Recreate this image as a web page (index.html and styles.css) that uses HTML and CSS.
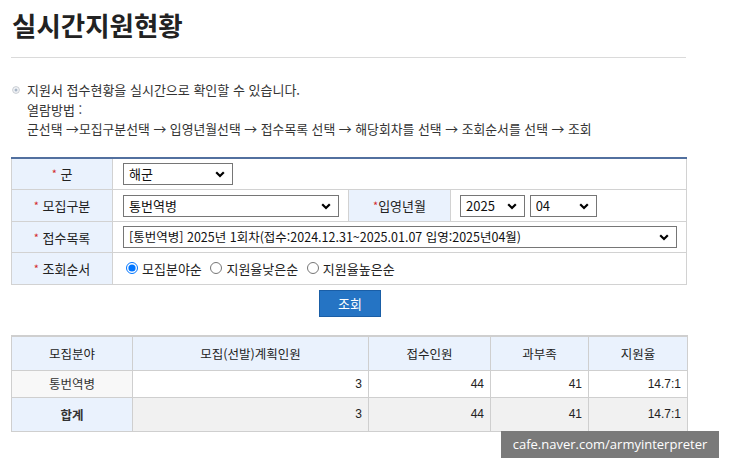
FILE: index.html
```html
<!DOCTYPE html>
<html lang="ko">
<head>
<meta charset="utf-8">
<title>실시간지원현황</title>
<link rel="stylesheet" href="styles.css">
</head>
<body>
<div class="page">
  <h1 class="title">실시간지원현황</h1>

  <div class="info">
    <p class="info-line"><svg class="bullet" width="8" height="8" viewBox="0 0 8 8"><circle cx="4" cy="4" r="3.4" fill="#f3f5f8" stroke="#c4c8ce" stroke-width="0.9"/><circle cx="4" cy="4" r="1.5" fill="#a9b6c6"/></svg>지원서 접수현황을 실시간으로 확인할 수 있습니다.</p>
    <p class="info-line">열람방법 :</p>
    <p class="info-line">군선택 →모집구분선택 → 입영년월선택 → 접수목록 선택 → 해당회차를 선택 → 조회순서를 선택 → 조회</p>
  </div>

  <table class="form">
    <colgroup><col class="c1"><col class="c2"><col class="c3"><col class="c4"></colgroup>
    <tr class="r1">
      <th><span class="star">*</span> 군</th>
      <td colspan="3">
        <span class="sel w-gun"><select><option>해군</option></select><svg width="10" height="7" viewBox="0 0 10 7"><path d="M1.2 1.2 L5 5 L8.8 1.2" fill="none" stroke="#000" stroke-width="2.2"/></svg></span>
      </td>
    </tr>
    <tr class="r2">
      <th><span class="star">*</span> 모집구분</th>
      <td>
        <span class="sel w-type"><select><option>통번역병</option></select><svg width="10" height="7" viewBox="0 0 10 7"><path d="M1.2 1.2 L5 5 L8.8 1.2" fill="none" stroke="#000" stroke-width="2.2"/></svg></span>
      </td>
      <th><span class="star">*</span>입영년월</th>
      <td>
        <span class="sel w-year"><select><option>2025</option></select><svg width="10" height="7" viewBox="0 0 10 7"><path d="M1.2 1.2 L5 5 L8.8 1.2" fill="none" stroke="#000" stroke-width="2.2"/></svg></span>
        <span class="sel w-month"><select><option>04</option></select><svg width="10" height="7" viewBox="0 0 10 7"><path d="M1.2 1.2 L5 5 L8.8 1.2" fill="none" stroke="#000" stroke-width="2.2"/></svg></span>
      </td>
    </tr>
    <tr class="r3">
      <th><span class="star">*</span> 접수목록</th>
      <td colspan="3">
        <span class="sel w-list"><select><option>[통번역병] 2025년 1회차(접수:2024.12.31~2025.01.07 입영:2025년04월)</option></select><svg width="10" height="7" viewBox="0 0 10 7"><path d="M1.2 1.2 L5 5 L8.8 1.2" fill="none" stroke="#000" stroke-width="2.2"/></svg></span>
      </td>
    </tr>
    <tr class="r4">
      <th><span class="star">*</span> 조회순서</th>
      <td colspan="3" class="radios">
        <label><input type="radio" name="ord" checked>모집분야순</label>
        <label><input type="radio" name="ord">지원율낮은순</label>
        <label><input type="radio" name="ord">지원율높은순</label>
      </td>
    </tr>
  </table>

  <div class="btn-row"><button class="btn">조회</button></div>

  <table class="data">
    <colgroup><col class="d1"><col class="d2"><col class="d3"><col class="d4"><col class="d5"></colgroup>
    <thead>
      <tr><th>모집분야</th><th>모집(선발)계획인원</th><th>접수인원</th><th>과부족</th><th>지원율</th></tr>
    </thead>
    <tbody>
      <tr class="row"><th>통번역병</th><td>3</td><td>44</td><td>41</td><td>14.7:1</td></tr>
      <tr class="total"><th>합계</th><td>3</td><td>44</td><td>41</td><td>14.7:1</td></tr>
    </tbody>
  </table>
</div>
<div class="watermark">cafe.naver.com/armyinterpreter</div>
</body>
</html>
```

FILE: styles.css
```css
html, body {
  margin: 0;
  padding: 0;
  background: #fff;
}
body {
  font-family: "Noto Sans CJK KR", "Noto Sans", sans-serif;
  color: #333;
  width: 729px;
  height: 467px;
  position: relative;
  overflow: hidden;
}
.page {
  padding: 0 43px 0 11px;
}
.title {
  margin: 0;
  padding: 6px 0 0 1px;
  height: 51px;
  font-size: 26.5px;
  line-height: 38px;
  font-weight: 700;
  color: #222;
  border-bottom: 1px solid #dadada;
}
.info {
  margin-top: 22px;
  padding-left: 16px;
}
.info-line {
  margin: 0;
  font-size: 13px;
  line-height: 19.5px;
  color: #333;
  position: relative;
}
.info-line:last-child {
  font-size: 12.85px;
}
.bullet {
  position: absolute;
  left: -15px;
  top: 6px;
}
.form {
  margin-top: 18px;
  width: 675px;
  border-collapse: collapse;
  table-layout: fixed;
  border-top: 2px solid #52709f;
  font-size: 13px;
}
.form .c1 { width: 101px; }
.form .c2 { width: 236px; }
.form .c3 { width: 102px; }
.form .c4 { width: 236px; }
.form th, .form td {
  border: 1px solid #d2d2d2;
  padding: 0;
}
.form th {
  background: #eaf2fd;
  font-weight: 400;
  color: #222;
  text-align: center;
  font-size: 13px;
}
.form td {
  padding-left: 10px;
}
.form .r1 { height: 32px; }
.form .r2 { height: 32px; }
.form .r3 { height: 31px; }
.form .r4 { height: 32px; }
.star {
  color: #d2272d;
  font-size: 11px;
  position: relative;
  top: -1px;
}
.sel {
  position: relative;
  display: inline-block;
  vertical-align: middle;
}
.sel select {
  appearance: none;
  -webkit-appearance: none;
  border: 1px solid #767676;
  border-radius: 0;
  background: #fff;
  height: 22px;
  font-family: "Noto Sans CJK KR", sans-serif;
  font-size: 13px;
  color: #111;
  padding: 0 20px 0 5px;
  margin: 0;
  width: 100%;
  line-height: 20px;
  box-sizing: border-box;
}
.w-list select {
  font-size: 12.5px;
}
.sel svg {
  position: absolute;
  right: 8px;
  top: 8px;
  pointer-events: none;
}
.w-gun { width: 110px; }
.w-type { width: 216px; }
.w-year { width: 65px; margin-left: -1px; }
.w-month { width: 67px; margin-left: 1px; }
.w-list { width: 554px; }
.radios {
  font-size: 13px;
  color: #222;
}
.radios label {
  display: inline-flex;
  align-items: center;
  margin-right: 2px;
}
.radios input {
  margin: 0 4px 0 3px;
  width: 12px;
  height: 12px;
  accent-color: #0075ff;
}
.btn-row {
  display: flex;
  justify-content: center;
  padding-top: 5px;
  padding-left: 3px;
}
.btn {
  width: 62px;
  height: 27px;
  background: #2574c4;
  border: 1px solid #1a5ea6;
  color: #fff;
  font-family: "Noto Sans CJK KR", sans-serif;
  font-size: 13px;
  padding: 0;
  border-radius: 0;
}
.data {
  margin-top: 18px;
  width: 676px;
  border-collapse: collapse;
  table-layout: fixed;
  font-family: "Liberation Sans", "Noto Sans CJK KR", sans-serif;
  font-size: 12px;
}
.data .d1 { width: 121px; }
.data .d2 { width: 236px; }
.data .d3 { width: 122px; }
.data .d4 { width: 98px; }
.data .d5 { width: 99px; }
.data th, .data td {
  border: 1px solid #cfcfcf;
  padding: 0;
}
.data thead tr { height: 34px; }
.data thead th {
  background: #eaf2fd;
  border-top: 2px solid #cfcfcf;
  font-weight: 400;
  font-family: "Noto Sans CJK KR", sans-serif;
  font-size: 12.5px;
  color: #222;
}
.data tbody th {
  font-weight: 400;
  font-family: "Noto Sans CJK KR", sans-serif;
  font-size: 12.5px;
  color: #333;
}
.data td {
  text-align: right;
  padding-right: 6px;
  color: #222;
}
.data .row { height: 27px; }
.data .row th { background: #f8f8f8; }
.data .row td { background: #fff; }
.data .total { height: 34px; }
.data .total th {
  background: #eaf2fd;
  font-weight: 700;
}
.data .total td { background: #f1f1f1; }
.watermark {
  position: absolute;
  left: 501px;
  top: 431px;
  width: 218px;
  height: 27px;
  background: #7a7a7a;
  color: #fff;
  font-family: "Open Sans", "Noto Sans", sans-serif;
  font-size: 13px;
  line-height: 27px;
  text-align: center;
}
```
